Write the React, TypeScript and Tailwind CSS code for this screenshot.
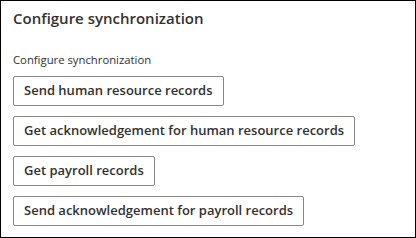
import React from "react";

const actions = [
  "Send human resource records",
  "Get acknowledgement for human resource records",
  "Get payroll records",
  "Send acknowledgement for payroll records",
];

export default function App() {
  return (
    <div
      className="w-[416px] h-[238px] border border-black bg-white text-[#323130] px-3 pt-[6px]"
      style={{ fontFamily: '"Open Sans", "Noto Sans", sans-serif' }}
    >
      {/* Title */}
      <h1 className="text-[15px] font-semibold leading-[22px]">
        Configure synchronization
      </h1>
      {/* Group label */}
      <p className="mt-[23px] text-[11.3px] leading-[16px]">Configure synchronization</p>
      {/* Action buttons */}
      <div className="mt-[8px] flex flex-col items-start gap-[10px]">
        {actions.map((label) => (
          <button
            key={label}
            className="h-[30px] px-[10px] border border-[#8a8886] rounded-[2px] bg-white text-[13px] font-semibold text-[#323130]"
          >
            {label}
          </button>
        ))}
      </div>
    </div>
  );
}
